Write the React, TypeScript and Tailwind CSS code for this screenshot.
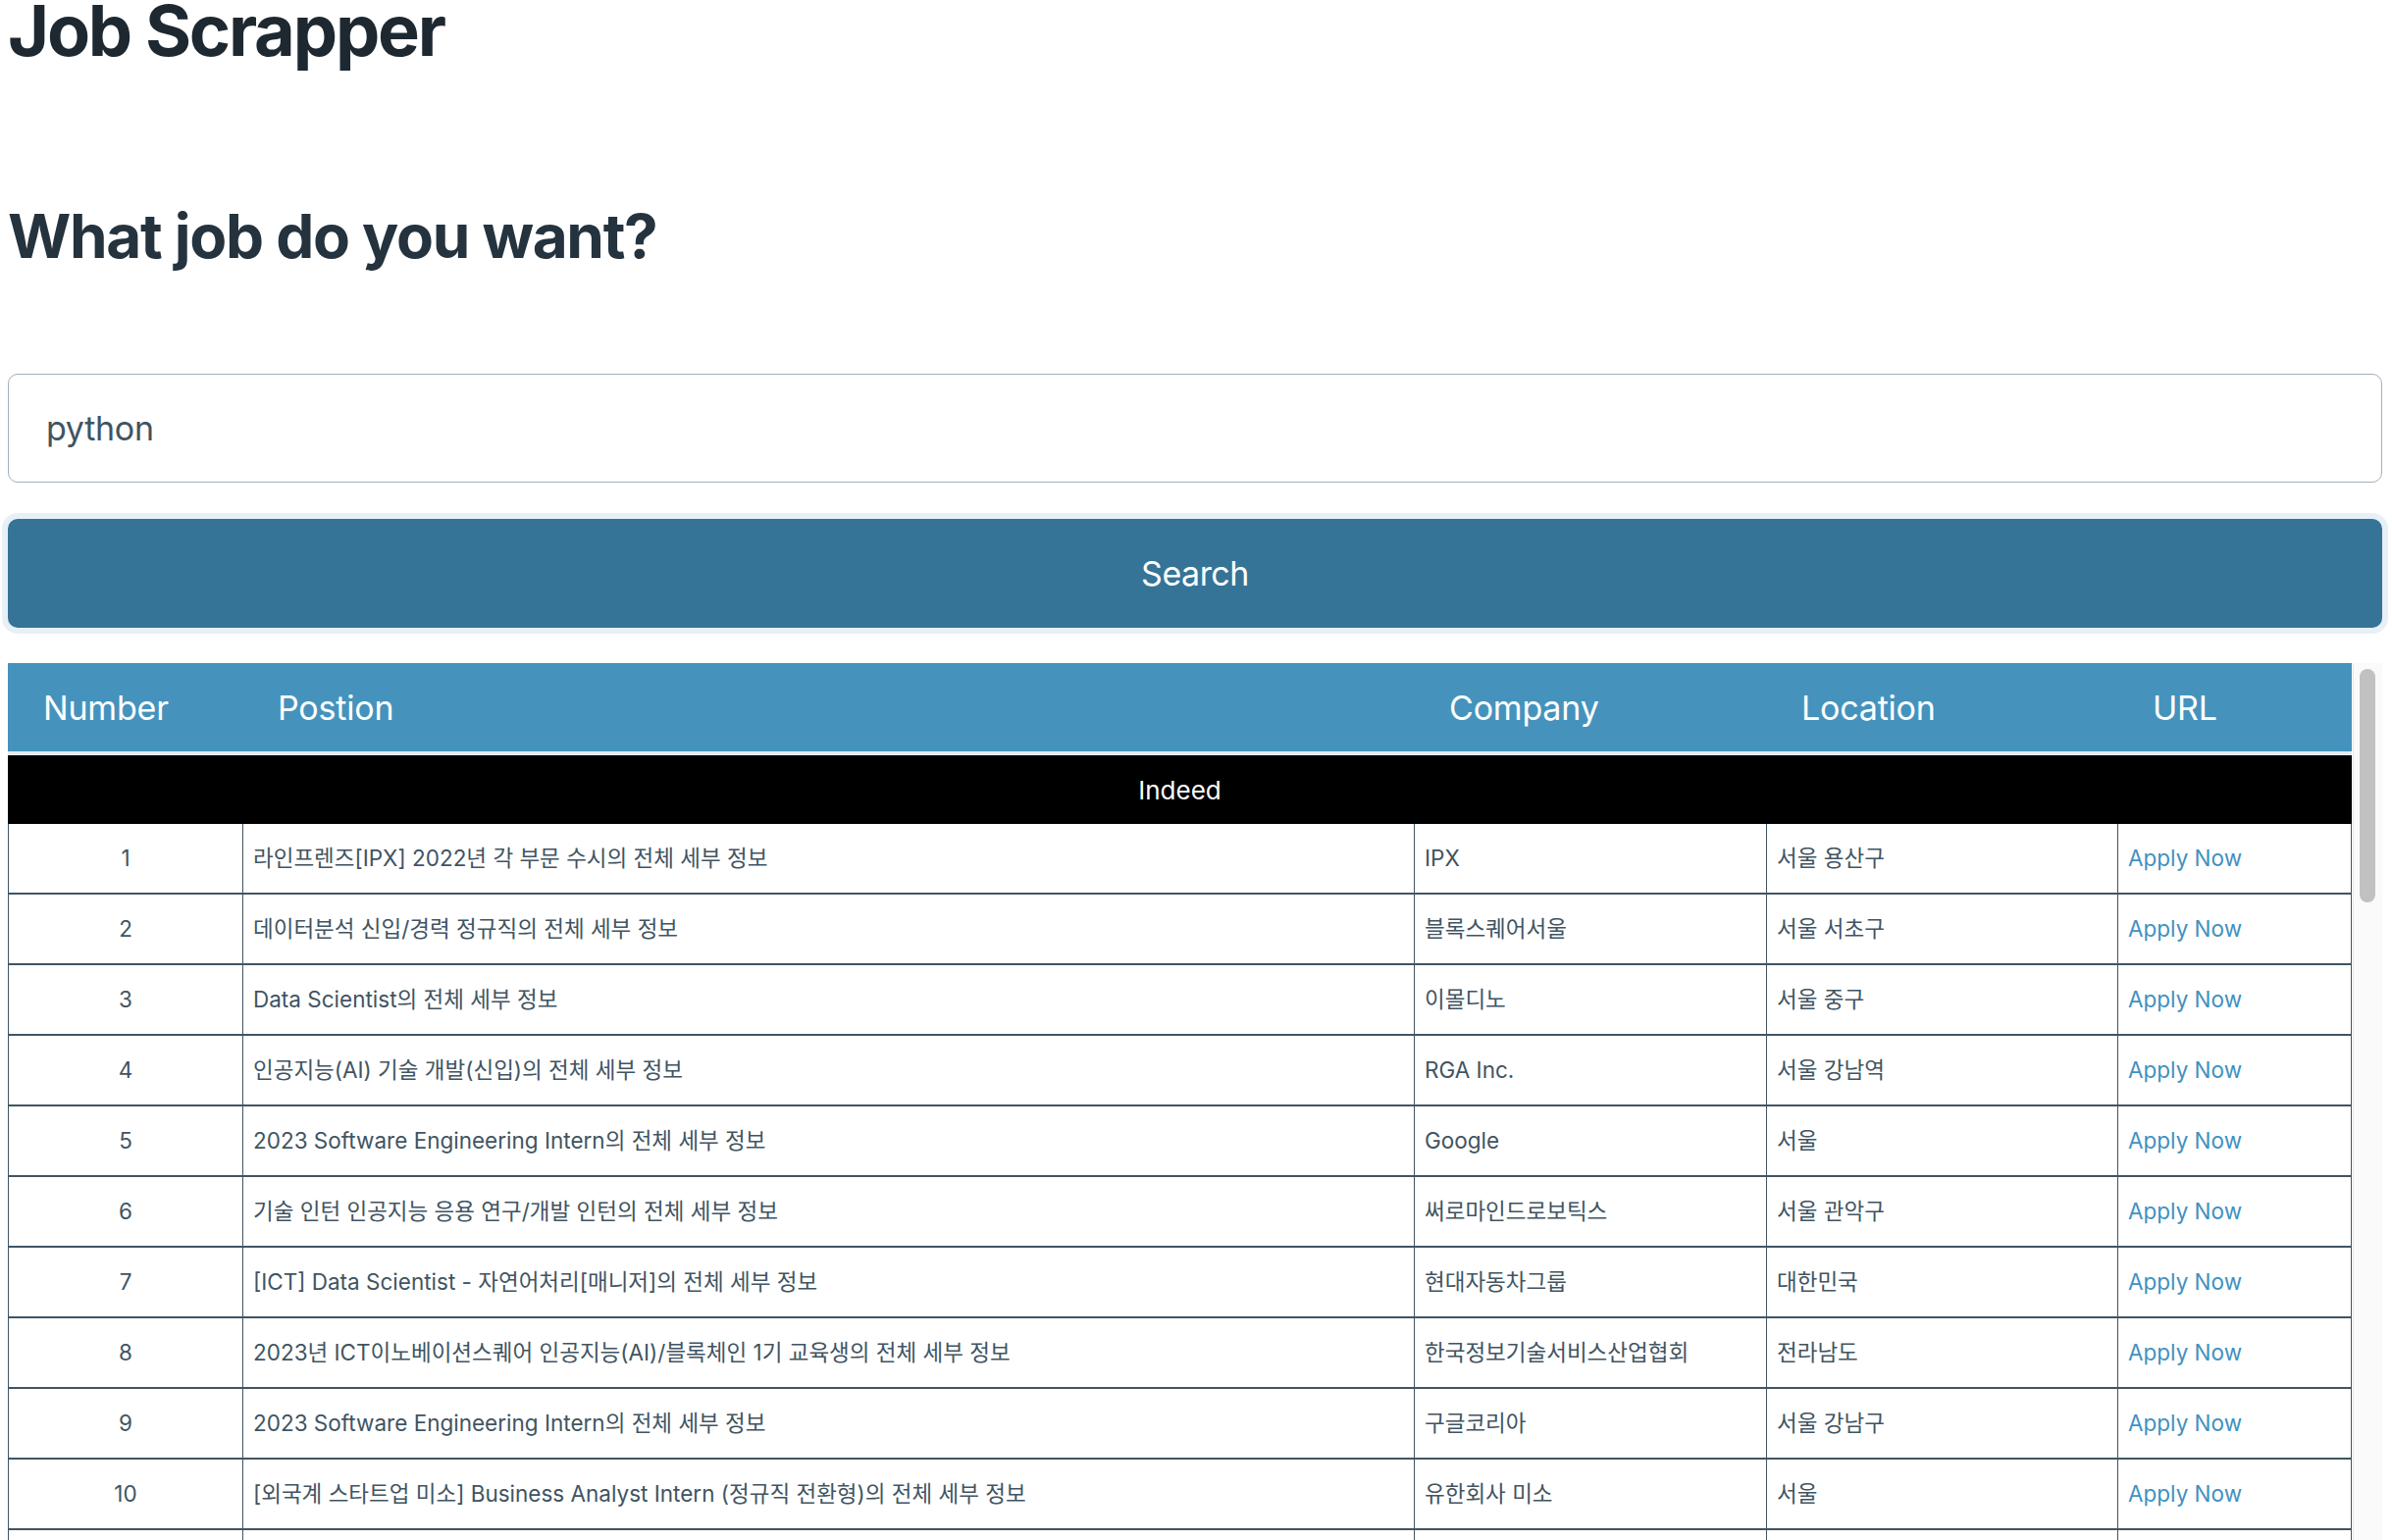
import React from "react";

const jobs: [string, string, string][] = [
  ["라인프렌즈[IPX] 2022년 각 부문 수시의 전체 세부 정보", "IPX", "서울 용산구"],
  ["데이터분석 신입/경력 정규직의 전체 세부 정보", "블록스퀘어서울", "서울 서초구"],
  ["Data Scientist의 전체 세부 정보", "이몰디노", "서울 중구"],
  ["인공지능(AI) 기술 개발(신입)의 전체 세부 정보", "RGA Inc.", "서울 강남역"],
  ["2023 Software Engineering Intern의 전체 세부 정보", "Google", "서울"],
  ["기술 인턴 인공지능 응용 연구/개발 인턴의 전체 세부 정보", "써로마인드로보틱스", "서울 관악구"],
  ["[ICT] Data Scientist - 자연어처리[매니저]의 전체 세부 정보", "현대자동차그룹", "대한민국"],
  ["2023년 ICT이노베이션스퀘어 인공지능(AI)/블록체인 1기 교육생의 전체 세부 정보", "한국정보기술서비스산업협회", "전라남도"],
  ["2023 Software Engineering Intern의 전체 세부 정보", "구글코리아", "서울 강남구"],
  ["[외국계 스타트업 미소] Business Analyst Intern (정규직 전환형)의 전체 세부 정보", "유한회사 미소", "서울"],
  ["", "", ""],
];

export default function App() {
  return (
    <div className="h-screen overflow-hidden bg-white font-['Inter','Noto_Sans_CJK_KR',sans-serif] pl-[8px] pr-[10px]">
      <h1 className="text-[72px] font-bold leading-[62px] text-[#1e2831] tracking-[-2.2px]">Job Scrapper</h1>
      <h2 className="mt-[141px] text-[62px] font-bold leading-[75px] text-[#24333e] tracking-[-1.3px]">What job do you want?</h2>
      <input
        defaultValue="python"
        className="mt-[103px] block h-[111px] w-full rounded-[10px] border border-[#a2afb9] bg-white px-[38px] text-[34px] tracking-[-0.3px] text-[#415462] outline-none"
      />
      <button className="mt-[37px] flex h-[111px] w-full items-center justify-center rounded-[10px] bg-[#357497] text-[34px] tracking-[-0.5px] text-white shadow-[0_0_0_6px_#e7f0f7]">
        Search
      </button>
      <div className="mt-[36px] flex h-[894px]">
        <div className="min-w-0 flex-1 overflow-hidden">
          <table className="w-full table-fixed border-separate border-spacing-0">
            <colgroup>
              <col className="w-[239px]" />
              <col className="w-[1194px]" />
              <col className="w-[359px]" />
              <col className="w-[358px]" />
              <col />
            </colgroup>
            <thead>
              <tr>
                {["Number", "Postion", "Company", "Location", "URL"].map((h) => (
                  <th
                    key={h}
                    className="h-[94px] border-b-[4px] border-[#e4eaef] bg-[#4593bd] pl-[36px] text-left text-[34px] font-normal tracking-[-0.2px] text-white"
                  >
                    {h}
                  </th>
                ))}
              </tr>
            </thead>
            <tbody>
              <tr>
                <td colSpan={5} className="h-[70px] bg-black text-center text-[26px] text-white">
                  Indeed
                </td>
              </tr>
              {jobs.map(([pos, company, loc], i) => (
                <tr key={i} className="h-[72px] text-[22.5px] text-[#415462]">
                  <td className="border-b-2 border-l border-[#415462] text-center">{pos ? i + 1 : ""}</td>
                  <td className="border-b-2 border-l border-[#415462] px-[10px] whitespace-nowrap">{pos}</td>
                  <td className="border-b-2 border-l border-[#415462] px-[10px] whitespace-nowrap">{company}</td>
                  <td className="border-b-2 border-l border-[#415462] px-[10px] whitespace-nowrap">{loc}</td>
                  <td className="border-b-2 border-l border-r border-[#415462] px-[10px]">
                    {pos ? <a href="#" className="text-[#4191c0]">Apply Now</a> : null}
                  </td>
                </tr>
              ))}
            </tbody>
          </table>
        </div>
        <div className="ml-[1px] w-[30px] shrink-0 border-l border-[#e8e8e8] bg-[#fafafa] pl-[6px] pt-[6px]">
          <div className="h-[238px] w-[16px] rounded-full bg-[#c1c1c1]" />
        </div>
      </div>
    </div>
  );
}
